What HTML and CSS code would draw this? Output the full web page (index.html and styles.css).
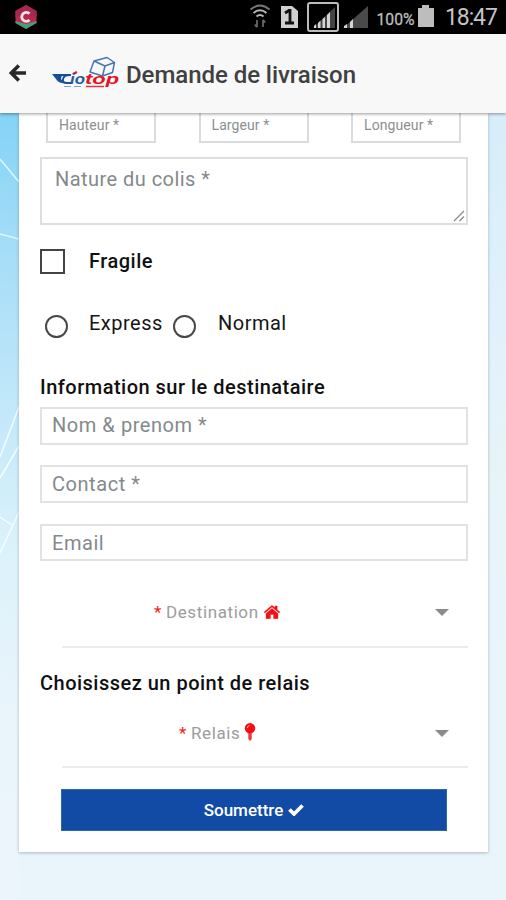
FILE: index.html
```html
<!DOCTYPE html>
<html lang="fr">
<head>
<meta charset="utf-8">
<title>Demande de livraison</title>
<link rel="stylesheet" href="styles.css">
</head>
<body>
<div class="app">
  <div class="status">
    <svg class="status-app" width="24" height="26" viewBox="0 0 24 26">
      <path d="M12 1 22.500 7v12L12 25 1.500 19V7z" fill="#ba2850"/>
      <path d="M12 1 22.500 7v6L12 11 1.500 13V7z" fill="#a6284c"/>
      <path d="M1.500 17 12 20l10.500-3v2L12 25 1.500 19z" fill="#43a078"/>
      <path d="M15.500 9.800A4.500 4.500 0 1 0 15.500 16" fill="none" stroke="#f3e4e8" stroke-width="2.800"/>
    </svg>
    <svg class="status-icons" width="187" height="34" viewBox="0 0 187 34">
      <g fill="none" stroke="#b5b5b5" stroke-width="2">
        <path d="M1.500 9.500q9.500-8 19 0" stroke="#777"/><path d="M4.500 13q6.500-5.500 13 0"/><path d="M7.500 16.500q3.500-3 7 0"/>
        <path d="M8 20v7M5.800 24.500 8 27.200M14 27v-7M16.200 22.500 14 19.800" stroke="#666" stroke-width="1.800"/>
      </g>
      <path d="M32 6h11l6 5v17H32z" fill="#d0d0d0"/>
      <path d="m36 13 4-2.500h1V23M36 23h9" fill="none" stroke="#111" stroke-width="2.800"/>
      <rect x="59" y="3" width="30" height="28" rx="2" fill="none" stroke="#bcbcbc" stroke-width="2"/>
      <path d="M64 28 86 7v21z" fill="#444"/>
      <path d="M65 28v-2l2-2v4zM69 28v-5l2.500-2.500V28zM73.500 28v-9l2.500-2v11zM78 28V15l3-3v16z" fill="#d5d5d5"/>
      <path d="M94 28 119 6v22z" fill="#4a4a4a"/>
      <path d="M95 28v-2l3-2v4zM101 28v-6l3-3v9z" fill="#d5d5d5"/>
      <path d="M173 5h7v3h5v19h-16V8h4z" fill="#bdbdbd"/>
      <text x="127.500" y="24.500" font-family="Roboto, sans-serif" font-size="17" fill="#bdbdbd" stroke="#bdbdbd" stroke-width=".3" textLength="38" lengthAdjust="spacingAndGlyphs">100%</text>
    </svg>
    <span class="clock">18:47</span>
  </div>
  <header class="bar">
    <svg class="back" width="18" height="20" viewBox="0 0 18 20"><path d="M9.800 2.500 2.300 10l7.500 7.500M3 10h14" fill="none" stroke="#292929" stroke-width="3.500"/></svg>
    <svg class="logo" width="68" height="34" viewBox="0 0 68 34">
      <path d="m42 5 13-3.500 7.500 5-2 10-10 3.500-12.500-4zM42 5l11 5 9.500-3.500M53 10l-2.500 10" fill="none" stroke="#4976ac" stroke-width="1.500" stroke-linejoin="round"/>
      <path d="M0 18h19l-2 2H10q-3 3 3 7.500-7-.5-9-4.500z" fill="#174f9b"/>
      <path d="M19 27h-4q-5 0-4-4 1-4.500 8-4" fill="none" stroke="#174f9b" stroke-width="2"/>
      <path d="m21 18 4-2" stroke="#e01a28" stroke-width="2"/>
      <g font-family="Liberation Sans, sans-serif" font-weight="bold" font-style="italic" font-size="14">
        <text x="18" y="28" fill="#1f5ba8" textLength="15" lengthAdjust="spacingAndGlyphs">io</text>
        <text x="33" y="27.500" fill="#e5131e" textLength="34" lengthAdjust="spacingAndGlyphs">top</text>
      </g>
      <path d="M12 30.500h7m3 0h7" stroke="#85a1c4"/><path d="M34 30.500h18" stroke="#df343c" stroke-width="1.500"/>
    </svg>
    <h1>Demande de livraison</h1>
  </header>
  <main class="content">
    <svg class="lines" width="19" height="787" viewBox="0 113 19 787" fill="none" stroke="#d9f8fd" stroke-width="1.500"><path d="m0 159 19 23M0 234l19 5"/><path stroke="#f4fdff" d="m0 457 19-50M0 478l19-32M0 553l19-41M0 517l12 8"/></svg>
    <form class="card">
      <div class="dims">
        <div>Hauteur *</div><div>Largeur *</div><div>Longueur *</div>
      </div>
      <div class="area"><span>Nature du colis *</span>
        <svg width="12" height="12" viewBox="0 0 12 12"><path d="M1 11 11 1M6.500 11 11 6.500" stroke="#888" stroke-width="1.200"/></svg>
      </div>
      <label class="check"><i class="box"></i><b>Fragile</b></label>
      <div class="radios"><i></i><span class="express">Express</span><i></i><span class="normal">Normal</span></div>
      <h2 class="h-info">Information sur le destinataire</h2>
      <div class="field nom"><span>Nom &amp; prenom *</span></div>
      <div class="field contact"><span>Contact *</span></div>
      <div class="field email"><span>Email</span></div>
      <div class="select dest">
        <span class="star">*</span><span class="name">Destination</span>
        <svg class="home" width="16" height="14" viewBox="0 0 16 14"><path d="M8 3.500 14 8.600V13q0 .7-.7.700H9.600V9.500H6.400v4.200H2.700q-.7 0-.7-.7V8.600zM.1 7 7.200.9q.8-.6 1.600 0l2.200 1.900V1h2.200v3.700L15.900 7l-.8.900L8 2 .9 7.900z" fill="#f50f12" stroke="#f50f12" stroke-width=".4"/></svg>
        <i class="caret"></i>
      </div>
      <h2 class="h-relais">Choisissez un point de relais</h2>
      <div class="select relais">
        <span class="star">*</span><span class="name">Relais</span>
        <svg class="pin" width="12" height="18" viewBox="0 0 12 18"><circle cx="6" cy="5.200" r="5.200" fill="#f50f12"/><path d="M4.300 10h3.400v6L6 18l-1.700-2z" fill="#f0373a"/><path d="M3.200 5Q3.400 2.900 5.500 2.500" fill="none" stroke="#ffb6b6"/></svg>
        <i class="caret"></i>
      </div>
      <div class="submit"><span>Soumettre</span><svg width="16" height="12" viewBox="0 0 16 12"><path d="m1.500 5.500 4.500 4.500 8.500-8.500" fill="none" stroke="#fff" stroke-width="3.700"/></svg></div>
    </form>
  </main>
</div>
</body>
</html>
```
FILE: styles.css
```css
* { box-sizing: border-box; }
body { margin: 0; font-family: Roboto, sans-serif; background: #edf4fb; }
.app { width: 506px; height: 900px; overflow: hidden; display: flex; flex-direction: column; }
.status { height: 34px; flex: none; background: #000; display: flex; align-items: center; padding-left: 14px; }
.status-icons { margin-left: 211px; }
.clock { color: #c4c4c4; font-size: 23px; line-height: 34px; margin-left: 9px; padding-top: 2px; letter-spacing: -1.100px; white-space: nowrap; }
.bar { height: 79px; flex: none; background: #f8f8f8; display: flex; align-items: center; padding-left: 9px; position: relative; z-index: 1; box-shadow: 0 1px 3px rgba(0,0,0,.4); }
.back { margin-top: -2px; }
.logo { margin: -1px 0 0 25px; }
h1 { margin: 2px 0 0 6px; font-size: 24px; line-height: 30px; font-weight: 500; color: #404040; letter-spacing: -.05px; white-space: nowrap; }
.content { flex: 1; position: relative; padding: 0 18px 0 19px; background: linear-gradient(#84d3f6 0, #a8def8 150px, #c3e8fa 300px, #dcf2fb 440px, #e9f4fb 600px, #ecf5fb 100%) left / 19px 100% no-repeat, linear-gradient(#d7edf9, #e4f2fb 280px, #e6f4f8 350px, #e9f3fb 480px, #e9f5fa); }
.lines { position: absolute; left: 0; top: 0; }
.card { position: relative; height: 739px; background: #fff; padding: 0 20px 0 21px; box-shadow: 0 1px 3px rgba(70,100,110,.4); display: flex; flex-direction: column; }
.dims { display: flex; justify-content: space-between; padding: 0 7px 0 6px; }
.dims div { width: 110px; height: 30px; border: solid #d8dcde; border-width: 0 2px 2px; padding: 3px 0 0 11px; color: #8b8f91; font-size: 14px; line-height: 18px; letter-spacing: .1px; white-space: nowrap; }
.area { margin-top: 14px; height: 68px; border: 2px solid #dadfe0; padding: 8px 13px; position: relative; color: #84898c; font-size: 20px; line-height: 24px; letter-spacing: .45px; }
.area svg { position: absolute; right: 1px; bottom: 1px; }
.check { margin-top: 24px; height: 25px; display: flex; align-items: center; color: #111; font-size: 20px; }
.check b { font-weight: 500; letter-spacing: .5px; margin: -2px 0 0 24px; }
.box { width: 25px; height: 25px; border: 2px solid #444; }
.radios { height: 24px; margin: 40px 0 0 5px; display: flex; align-items: center; font-size: 20px; color: #151515; letter-spacing: .5px; }
.radios i { width: 23px; height: 23px; border: 2px solid #484848; border-radius: 50%; }
.radios span { margin-top: -6px; white-space: nowrap; }
.express { width: 84px; margin-left: 21px; }
.normal { margin-left: 22px; }
h2 { margin: 0; font-size: 20px; line-height: 24px; font-weight: 500; color: #101010; letter-spacing: .49px; white-space: nowrap; }
.h-info { margin-top: 37px; }
.field { height: 38px; border: 2px solid #e0e3e4; padding-left: 10px; color: #84898c; font-size: 20px; line-height: 33px; letter-spacing: .55px; white-space: nowrap; }
.nom { margin-top: 8px; }
.contact { margin-top: 20px; line-height: 34px; }
.email { margin-top: 21px; height: 37px; line-height: 34px; }
.select { position: relative; margin-left: 22px; border-bottom: 2px solid #ececec; display: flex; color: #9c9c9c; font-size: 17px; line-height: 22px; white-space: nowrap; letter-spacing: .6px; }
.dest { margin-top: 40px; height: 47px; padding-left: 92px; }
.relais { margin-top: 27px; height: 46px; padding-left: 117px; }
.star { width: 12px; color: #f31a1c; }
.home { margin: 4px 0 0 5px; }
.pin { margin: 1px 0 0 4px; }
.caret { position: absolute; right: 19px; top: 8px; border: solid transparent; border-width: 7px 7px 0; border-top-color: #8b8b8b; }
.h-relais { margin-top: 23px; }
.submit { margin: 21px 21px 0 21px; height: 42px; border: 1px solid #2c6a9e; background: #124ba5; color: #fff; display: flex; justify-content: center; align-items: center; gap: 5px; font-size: 17px; font-weight: 500; white-space: nowrap; }
```
